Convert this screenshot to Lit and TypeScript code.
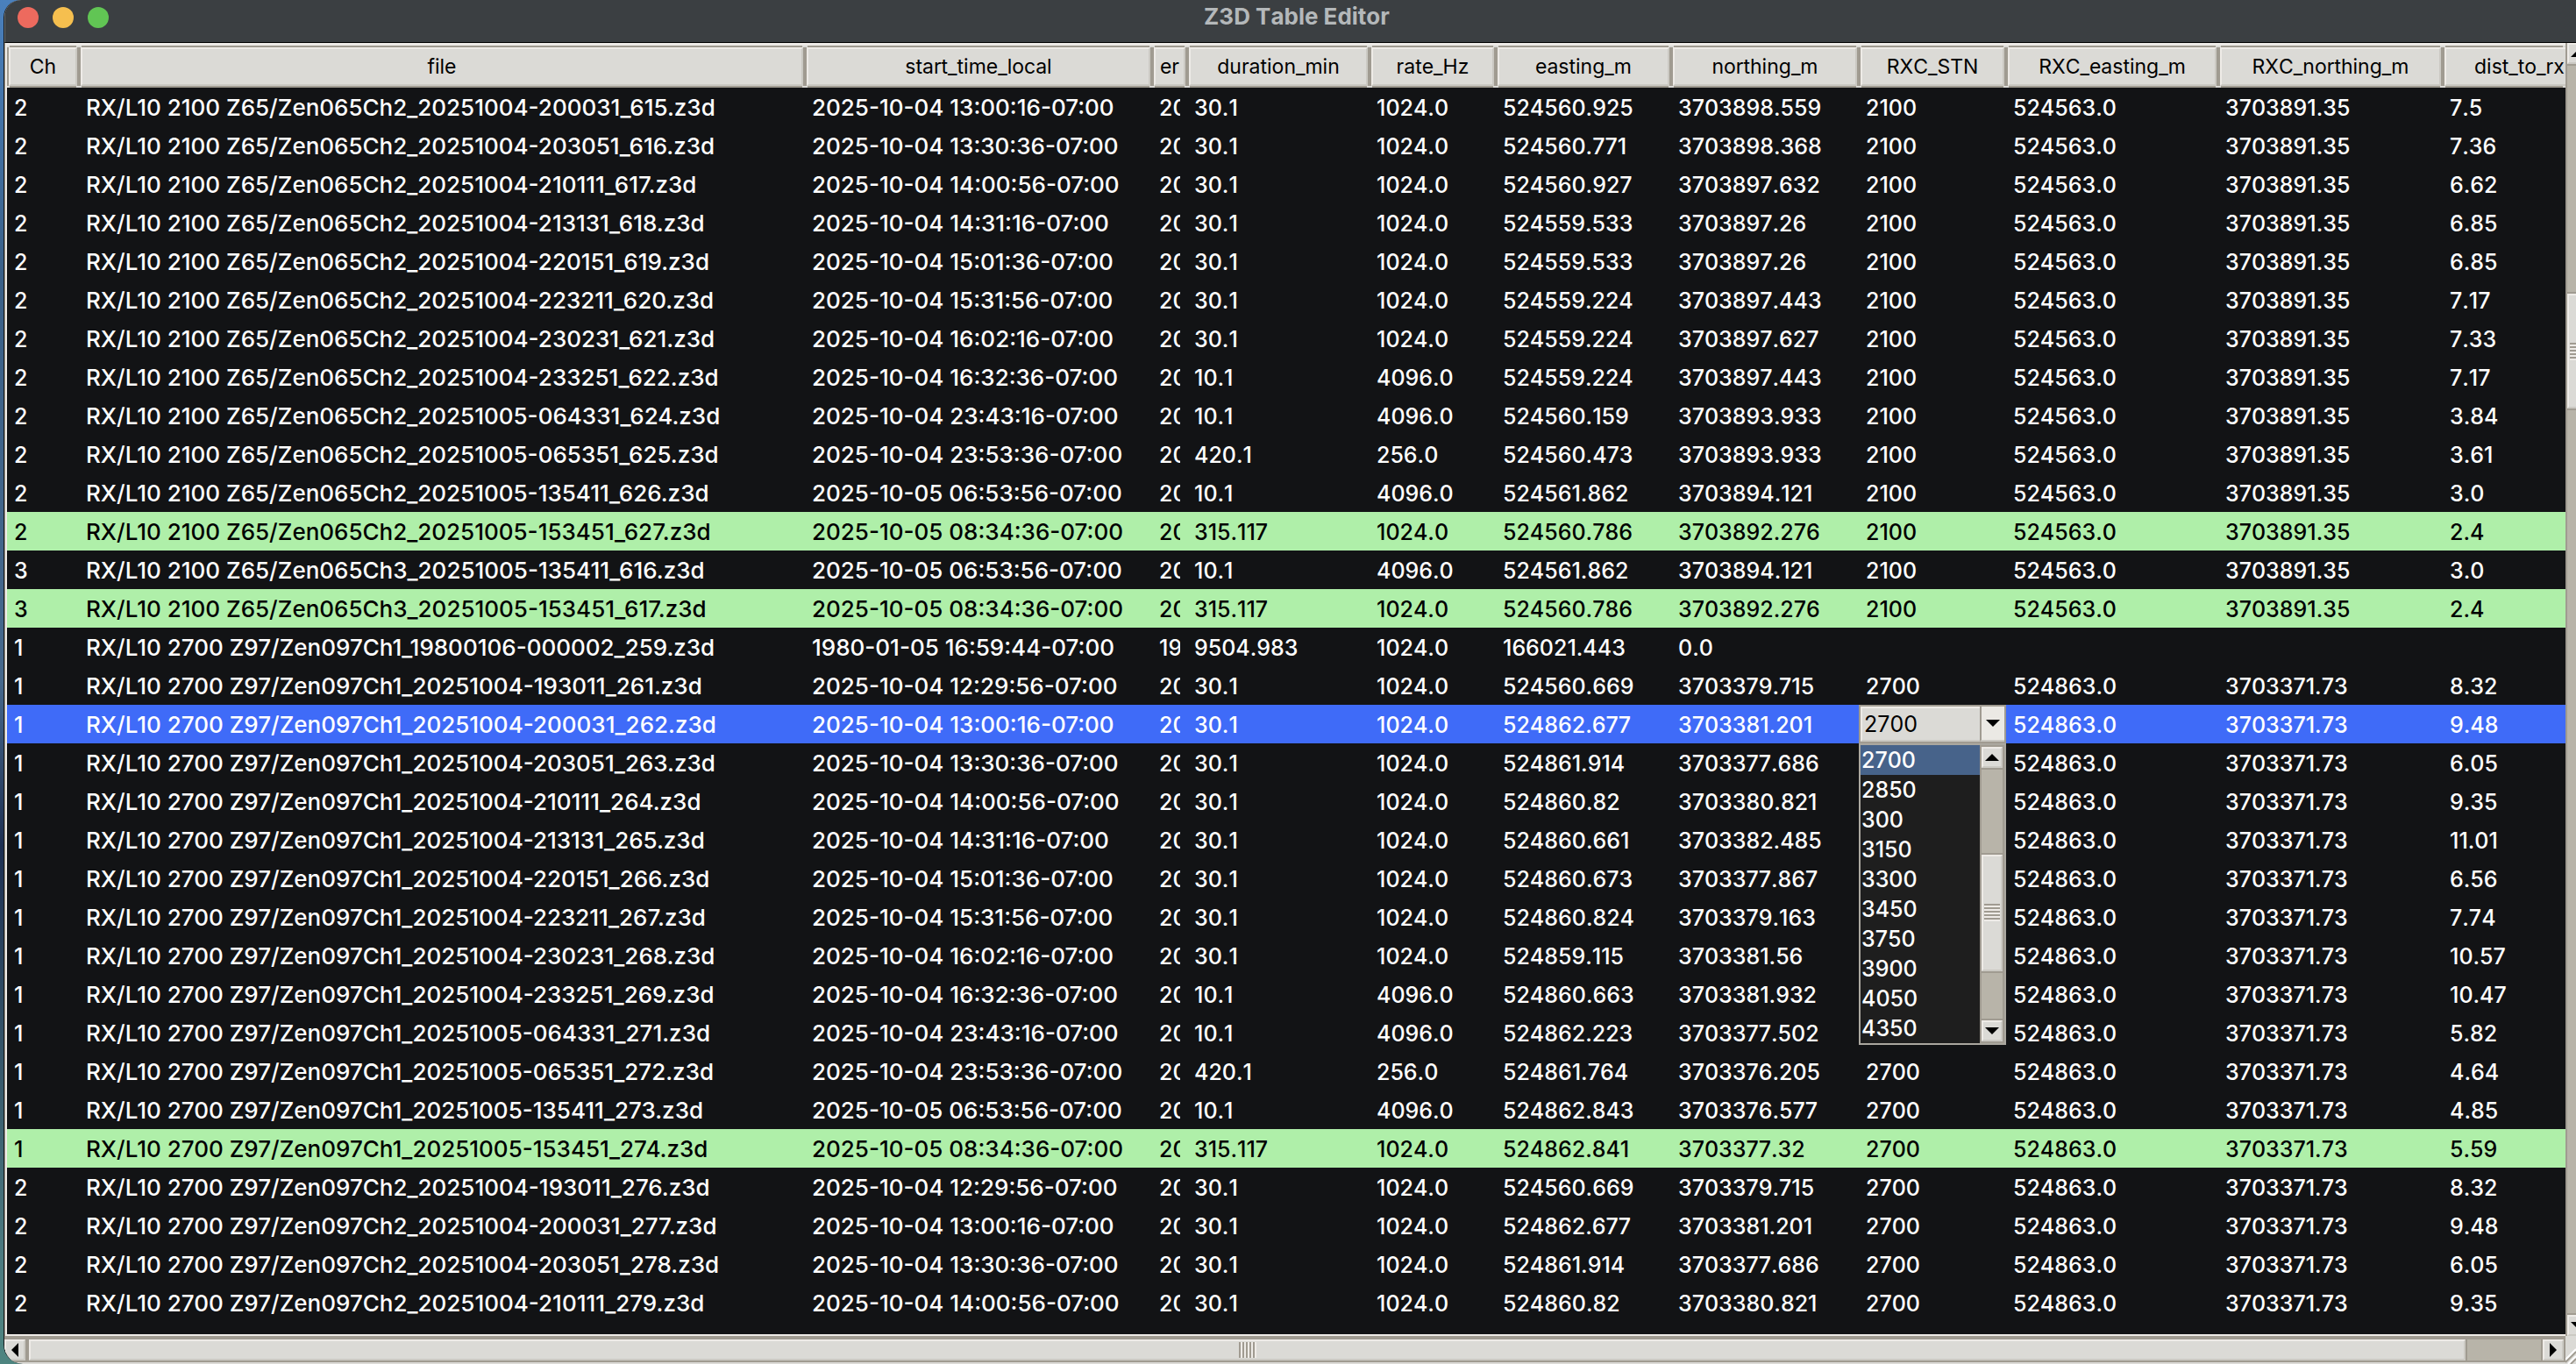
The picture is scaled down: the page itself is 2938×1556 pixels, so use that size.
import { LitElement, html, css, svg, nothing } from "lit";
import { customElement, property, state } from "lit/decorators.js";
import { classMap } from "lit/directives/class-map.js";
import { styleMap } from "lit/directives/style-map.js";

interface Column {
  key: string;
  label: string;
}

interface Row {
  tag: "" | "ok" | "selected";
  cells: string[];
}

const COLUMNS: Column[] = [
  { key: "ch", label: "Ch" },
  { key: "file", label: "file" },
  { key: "start", label: "start_time_local" },
  { key: "end", label: "er" },
  { key: "duration", label: "duration_min" },
  { key: "rate", label: "rate_Hz" },
  { key: "easting", label: "easting_m" },
  { key: "northing", label: "northing_m" },
  { key: "stn", label: "RXC_STN" },
  { key: "rxeasting", label: "RXC_easting_m" },
  { key: "rxnorthing", label: "RXC_northing_m" },
  { key: "dist", label: "dist_to_rx" },
];

const STATIONS = ["2700", "2850", "300", "3150", "3300", "3450", "3750", "3900", "4050", "4350"];

/* tag | channel | file stamp | local start | minutes | rate | easting | northing | distance */
const Z65 = `
|2|20251004-200031_615|2025-10-04 13:00:16|30.1|1024.0|524560.925|3703898.559|7.5
|2|20251004-203051_616|2025-10-04 13:30:36|30.1|1024.0|524560.771|3703898.368|7.36
|2|20251004-210111_617|2025-10-04 14:00:56|30.1|1024.0|524560.927|3703897.632|6.62
|2|20251004-213131_618|2025-10-04 14:31:16|30.1|1024.0|524559.533|3703897.26|6.85
|2|20251004-220151_619|2025-10-04 15:01:36|30.1|1024.0|524559.533|3703897.26|6.85
|2|20251004-223211_620|2025-10-04 15:31:56|30.1|1024.0|524559.224|3703897.443|7.17
|2|20251004-230231_621|2025-10-04 16:02:16|30.1|1024.0|524559.224|3703897.627|7.33
|2|20251004-233251_622|2025-10-04 16:32:36|10.1|4096.0|524559.224|3703897.443|7.17
|2|20251005-064331_624|2025-10-04 23:43:16|10.1|4096.0|524560.159|3703893.933|3.84
|2|20251005-065351_625|2025-10-04 23:53:36|420.1|256.0|524560.473|3703893.933|3.61
|2|20251005-135411_626|2025-10-05 06:53:56|10.1|4096.0|524561.862|3703894.121|3.0
ok|2|20251005-153451_627|2025-10-05 08:34:36|315.117|1024.0|524560.786|3703892.276|2.4
|3|20251005-135411_616|2025-10-05 06:53:56|10.1|4096.0|524561.862|3703894.121|3.0
ok|3|20251005-153451_617|2025-10-05 08:34:36|315.117|1024.0|524560.786|3703892.276|2.4`;

const Z97 = `
|1|19800106-000002_259|1980-01-05 16:59:44|9504.983|1024.0|166021.443|0.0|
|1|20251004-193011_261|2025-10-04 12:29:56|30.1|1024.0|524560.669|3703379.715|8.32
selected|1|20251004-200031_262|2025-10-04 13:00:16|30.1|1024.0|524862.677|3703381.201|9.48
|1|20251004-203051_263|2025-10-04 13:30:36|30.1|1024.0|524861.914|3703377.686|6.05
|1|20251004-210111_264|2025-10-04 14:00:56|30.1|1024.0|524860.82|3703380.821|9.35
|1|20251004-213131_265|2025-10-04 14:31:16|30.1|1024.0|524860.661|3703382.485|11.01
|1|20251004-220151_266|2025-10-04 15:01:36|30.1|1024.0|524860.673|3703377.867|6.56
|1|20251004-223211_267|2025-10-04 15:31:56|30.1|1024.0|524860.824|3703379.163|7.74
|1|20251004-230231_268|2025-10-04 16:02:16|30.1|1024.0|524859.115|3703381.56|10.57
|1|20251004-233251_269|2025-10-04 16:32:36|10.1|4096.0|524860.663|3703381.932|10.47
|1|20251005-064331_271|2025-10-04 23:43:16|10.1|4096.0|524862.223|3703377.502|5.82
|1|20251005-065351_272|2025-10-04 23:53:36|420.1|256.0|524861.764|3703376.205|4.64
|1|20251005-135411_273|2025-10-05 06:53:56|10.1|4096.0|524862.843|3703376.577|4.85
ok|1|20251005-153451_274|2025-10-05 08:34:36|315.117|1024.0|524862.841|3703377.32|5.59
|2|20251004-193011_276|2025-10-04 12:29:56|30.1|1024.0|524560.669|3703379.715|8.32
|2|20251004-200031_277|2025-10-04 13:00:16|30.1|1024.0|524862.677|3703381.201|9.48
|2|20251004-203051_278|2025-10-04 13:30:36|30.1|1024.0|524861.914|3703377.686|6.05
|2|20251004-210111_279|2025-10-04 14:00:56|30.1|1024.0|524860.82|3703380.821|9.35`;

function parse(block: string, station: string, box: string, rxE: string, rxN: string): Row[] {
  return block.trim().split("\n").map((line) => {
    const [tag, ch, stamp, start, minutes, rate, e, n, dist] = line.split("|");
    const file = `RX/L10 ${station} Z${box}/Zen0${box}Ch${ch}_${stamp}.z3d`;
    const located = dist !== "";
    return {
      tag: tag as Row["tag"],
      cells: [
        ch, file, `${start}-07:00`, start.slice(0, 2), minutes, rate, e, n,
        located ? station : "", located ? rxE : "", located ? rxN : "", dist,
      ],
    };
  });
}

const ROWS: Row[] = [
  ...parse(Z65, "2100", "65", "524563.0", "3703891.35"),
  ...parse(Z97, "2700", "97", "524863.0", "3703371.73"),
];

const ARROWS: Record<string, string> = {
  up: "0,8 16,8 8,0",
  down: "0,0 16,0 8,8",
  left: "8,0 8,16 0,8",
  right: "0,0 0,16 8,8",
};

/** Bevelled scrollbar with arrow buttons and a ridged thumb. */
@customElement("bevel-scrollbar")
class BevelScrollbar extends LitElement {
  @property({ type: Boolean, reflect: true }) horizontal = false;
  @property({ type: Number }) before = 0;
  @property({ type: Number }) size = 1;
  @property({ type: Number }) after = 0;

  static styles = css`
    :host { display: flex; flex-direction: column; background: #b8b4a9; }
    :host([horizontal]) { flex-direction: row; }
    .arrow {
      flex: none; box-sizing: border-box; width: 24px; height: 24px; padding: 0; margin: 0;
      display: flex; align-items: center; justify-content: center;
      background: #dbdad6; border: 2px solid; border-color: #eeebe7 #cbc9c3 #cbc9c3 #eeebe7; border-radius: 0;
    }
    .arrow svg { display: block; fill: #000; overflow: visible; }
    .trough { flex: 1; display: flex; flex-direction: column; min-height: 0; min-width: 0; }
    :host(:not([horizontal])) .trough { border-top: 2px solid #a09b91; border-bottom: 2px solid #a09b91; }
    :host([horizontal]) .trough { flex-direction: row; border-left: 4px solid #a09b91; border-right: 2px solid #a09b91; }
    .space { flex-basis: 0; }
    .thumb {
      box-sizing: border-box; flex-basis: 0; display: flex; align-items: center; justify-content: center;
      background: #dbdad6; border: 2px solid; border-color: #eeebe7 #cbc9c3 #cbc9c3 #eeebe7;
    }
    :host(:not([horizontal])) .thumb { width: 24px; box-shadow: 0 2px #a09b91, 0 -2px #a09b91; }
    :host([horizontal]) .thumb { box-shadow: 2px 0 #a09b91; }
    .ridges { width: 18px; height: 20px; flex: none; background: repeating-linear-gradient(to bottom, #a09b91 0 2px, #eeebe7 2px 4px); }
    :host([horizontal]) .ridges { width: 20px; height: 18px; background: repeating-linear-gradient(to right, #a09b91 0 2px, #eeebe7 2px 4px); }
  `;

  private arrow(dir: string) {
    const flat = dir === "up" || dir === "down";
    return html`<button class="arrow" type="button" aria-label="Scroll ${dir}">
      <svg width=${flat ? 16 : 8} height=${flat ? 8 : 16} aria-hidden="true">${svg`<polygon points=${ARROWS[dir]}></polygon>`}</svg>
    </button>`;
  }

  render() {
    return html`
      ${this.arrow(this.horizontal ? "left" : "up")}
      <div class="trough">
        <div class="space" style=${styleMap({ flexGrow: String(this.before) })}></div>
        <div class="thumb" style=${styleMap({ flexGrow: String(this.size) })}><div class="ridges"></div></div>
        <div class="space" style=${styleMap({ flexGrow: String(this.after) })}></div>
      </div>
      ${this.arrow(this.horizontal ? "right" : "down")}
    `;
  }
}

/** Combobox editor that sits over the station cell of the selected row. */
@customElement("station-picker")
class StationPicker extends LitElement {
  @state() private value = "2700";

  static styles = css`
    :host { display: block; position: relative; height: 44px; color: #000; }
    .field {
      box-sizing: border-box; height: 44px; display: grid; grid-template-columns: 1fr 28px;
      border: 2px solid #a09b91; background: #dbdad6; position: relative;
    }
    .value {
      appearance: none; grid-column: 1 / -1; grid-row: 1; margin: 0; width: 100%; height: 40px; border-radius: 0;
      border: 2px solid; border-color: #eeebe7 #cbc9c3 #cbc9c3 #eeebe7; outline: none;
      padding: 0 28px 0 2px; background: #dbdad6; color: #000; font: inherit; font-weight: 400;
    }
    .drop {
      grid-column: 2; grid-row: 1; pointer-events: none; border-left: 2px solid #a09b91; border-bottom: 2px solid #cbc9c3;
      background: #ebe9e4; display: flex; align-items: center; justify-content: center; z-index: 1;
    }
    .popup {
      position: absolute; z-index: 3; top: 44px; left: 0; right: 0; display: flex;
      border: 2px solid #aaa79f; background: #1e1e1e;
    }
    .list { flex: 1; margin: 0; padding: 0; list-style: none; color: #fff; }
    .option { height: 34px; line-height: 34px; padding-left: 1px; }
    .option.current { background: #47638a; }
    .bar { width: 24px; border: solid #a09b91; border-width: 2px; }
  `;

  render() {
    return html`
      <div class="field">
        <select class="value" aria-label="RXC_STN" @change=${(e: Event) => (this.value = (e.target as HTMLSelectElement).value)}>
          ${STATIONS.map((s) => html`<option ?selected=${s === this.value}>${s}</option>`)}
        </select>
        <span class="drop"><svg width="16" height="8" aria-hidden="true"><polygon points="0,0 16,0 8,8"></polygon></svg></span>
      </div>
      <div class="popup">
        <ul class="list" role="listbox" aria-label="Stations">
          ${STATIONS.map((s) => html`<li
            role="option"
            aria-selected=${s === this.value}
            class=${classMap({ option: true, current: s === this.value })}
            @click=${() => (this.value = s)}
          >${s}</li>`)}
        </ul>
        <bevel-scrollbar class="bar" .before=${98} .size=${131} .after=${55}></bevel-scrollbar>
      </div>
    `;
  }
}

@customElement("app-root")
class AppRoot extends LitElement {
  static styles = css`
    :host {
      display: block; overflow: hidden; padding-left: 4px;
      background: linear-gradient(to bottom, #4a80bd, #3a6088 20%, #46688c 50%, #1d2f52 62%, #4c7a80 92%, #4e8580);
      font-family: Inter, "Liberation Sans", sans-serif; font-kerning: none;
    }
    .window {
      box-sizing: border-box; min-height: 100vh; display: flex; flex-direction: column; overflow: hidden;
      border-left: 1px solid #17191a; border-radius: 20px 0 0 22px; background: #dbdad6;
    }
    .titlebar {
      flex: none; height: 48px; display: grid; grid-template-columns: 1fr auto 1fr;
      background: #3b3f42; border-bottom: 1px solid #000; border-left: 1px solid #6a6d6f;
    }
    .lights { display: flex; gap: 16px; padding: 8px 0 0 14px; }
    .light { width: 24px; height: 24px; padding: 0; border: 0; border-radius: 50%; }
    .close { background: #ed6a5e; }
    .minimise { background: #f5bf4f; }
    .zoom { background: #61c554; }
    .title { margin: 0; padding-left: 14px; font-size: 26px; line-height: 38px; font-weight: 700; color: #b4b8ba; }
    .body { flex: 1; display: flex; }
    .pane {
      flex: 1; min-width: 0; overflow: hidden; background: #121315;
      border: solid #eeebe7; border-width: 3px 0 2px 2px; box-shadow: -1px 0 #a09b91; margin-left: 1px;
    }
    .grid { width: 100%; table-layout: fixed; border-collapse: collapse; color: #fff; font-size: 25px; font-weight: 500; }
    .c-ch { width: 82px; }
    .c-start { width: 396px; }
    .c-end { width: 40px; }
    .c-duration { width: 208px; }
    .c-rate { width: 144px; }
    .c-easting { width: 200px; }
    .c-northing { width: 214px; }
    .c-stn { width: 168px; }
    .c-rxeasting { width: 242px; }
    .c-rxnorthing { width: 256px; }
    .c-dist { width: 140px; }
    .head {
      padding: 2px; font-size: 23px; font-weight: 400; color: #000;
      background:
        linear-gradient(#dbdad6, #dbdad6) 0 0 / 3px 2px no-repeat,
        linear-gradient(#dbdad6, #dbdad6) 100% 0 / 3px 2px no-repeat,
        linear-gradient(#dbdad6, #dbdad6) 0 100% / 3px 2px no-repeat,
        linear-gradient(#dbdad6, #dbdad6) 100% 100% / 3px 2px no-repeat,
        #a09b91;
    }
    .face {
      box-sizing: border-box; height: 44px; line-height: 40px; overflow: hidden; white-space: nowrap; text-align: center;
      background: #dbdad6; border: 2px solid; border-color: #eeebe7 #cbc9c3 #cbc9c3 #eeebe7;
    }
    .head:last-child { padding-right: 0; }
    .head:last-child .face { border-right: 0; text-align: left; padding-left: 32px; }
    .cell { height: 44px; padding: 0 8px; }
    .text { line-height: 46px; height: 44px; overflow: hidden; white-space: nowrap; }
    .wide { font-size: 26px; font-kerning: normal; }
    .ok { background: #afefa9; color: #000; }
    .selected { background: #3f6bf8; }
    .editing { padding: 0; }
    .vbar-clip { flex: none; width: 12px; overflow: hidden; display: flex; background: #dbdad6; }
    .vbar { flex: none; width: 24px; border-left: 2px solid #a09b91; }
    .foot { flex: none; display: flex; height: 32px; }
    .hbar { flex: 1; border: solid #a09b91; border-width: 4px 2px 2px 0; height: 24px; }
    .corner { width: 12px; }
    .corner svg { display: block; }
  `;

  private cell(row: Row, text: string, i: number) {
    const key = COLUMNS[i].key;
    if (row.tag === "selected" && key === "stn") {
      return html`<td class="cell editing"><station-picker></station-picker></td>`;
    }
    const classes = { text: true, wide: key === "file" || key === "start" };
    return html`<td class="cell"><div class=${classMap(classes)}>${text || nothing}</div></td>`;
  }

  render() {
    return html`
      <main class="window">
        <header class="titlebar">
          <div class="lights">
            <button class="light close" type="button" aria-label="Close"></button>
            <button class="light minimise" type="button" aria-label="Minimise"></button>
            <button class="light zoom" type="button" aria-label="Zoom"></button>
          </div>
          <h1 class="title">Z3D Table Editor</h1>
        </header>
        <div class="body">
          <div class="pane">
            <table class="grid">
              <colgroup>${COLUMNS.map((c) => html`<col class="c-${c.key}" />`)}</colgroup>
              <thead>
                <tr>${COLUMNS.map((c) => html`<th class="head" scope="col"><div class="face">${c.label}</div></th>`)}</tr>
              </thead>
              <tbody>
                ${ROWS.map((row) => html`<tr class=${row.tag}>${row.cells.map((t, i) => this.cell(row, t, i))}</tr>`)}
              </tbody>
            </table>
          </div>
          <div class="vbar-clip"><bevel-scrollbar class="vbar" .before=${261} .size=${128} .after=${1036}></bevel-scrollbar></div>
        </div>
        <footer class="foot">
          <bevel-scrollbar class="hbar" horizontal .before=${0} .size=${2777} .after=${86}></bevel-scrollbar>
          <div class="corner">
            <svg width="12" height="32" aria-hidden="true">
              <path d="M0 30L12 18M6 32L12 26" stroke="#a09b91" stroke-width="2"></path>
              <path d="M0 27L12 15M3 32L12 23" stroke="#fff" stroke-width="2"></path>
            </svg>
          </div>
        </footer>
      </main>
    `;
  }
}
